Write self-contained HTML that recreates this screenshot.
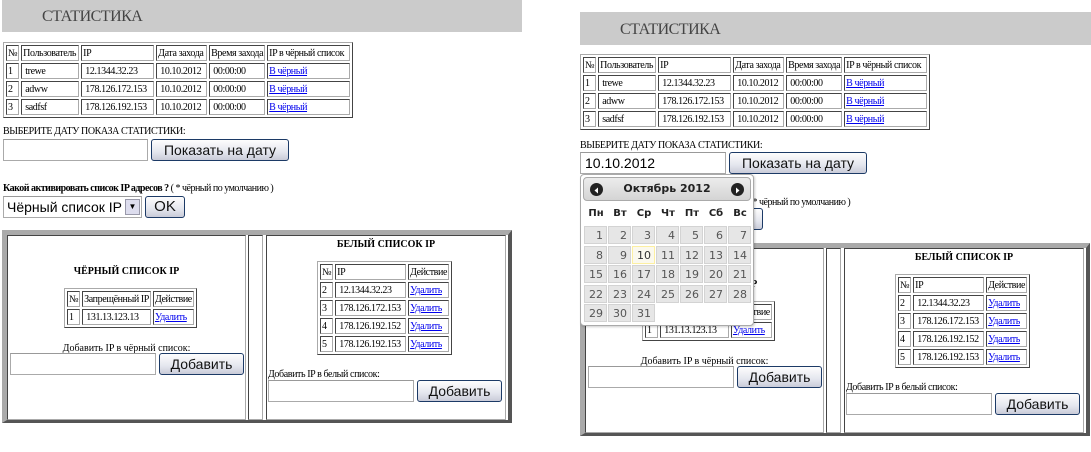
<!DOCTYPE html>
<html><head><meta charset="utf-8">
<style>
*{box-sizing:border-box}
body{margin:0;width:1091px;height:438px;overflow:hidden;background:#fff;font-family:"Liberation Serif","DejaVu Serif",serif;font-size:10px;color:#000;position:relative}
.p{position:absolute;width:540px;height:440px}
.a{position:absolute}
.hdr{background:#cbcbcb;height:33px;width:520px;left:2px;top:-1px;font-size:16px;color:#444;padding:9px 0 0 40px;letter-spacing:-0.5px}
table.t{position:absolute;border-collapse:separate;border-spacing:2px;border:1px solid;border-color:#aaa #444 #444 #aaa;font-size:10px;letter-spacing:-0.4px}
table.t td{border:1px solid;border-color:#444 #aaa #aaa #444;padding:0 1px;height:16px;white-space:nowrap}
a{color:#00e;text-decoration:underline}
.inp{position:absolute;border:1px solid #aaa;border-top-color:#999;background:#fff;height:22px;font-family:"Liberation Sans",sans-serif;font-size:14px;padding:2px 4px;white-space:nowrap;overflow:hidden}
.btn{position:absolute;height:22px;border:1px solid #1c3a66;border-radius:3px;background:linear-gradient(#fdfdfd,#e4e6ee 60%,#c9cbd8);font-family:"Liberation Sans",sans-serif;font-size:14px;text-align:center;line-height:20px;color:#111}
.frame{position:absolute;left:2px;top:230px;width:510px;height:193px;border:5px solid #aaa;border-right-color:#555;border-bottom-color:#555;border-right-width:4px;border-bottom-width:3px}
.cell{position:absolute;border:1px solid;border-color:#444 #aaa #aaa #444;top:0}
.b{font-weight:bold}
.dp{position:absolute;left:580px;top:174px;width:174px;height:152px;background:#fff;border:1px solid #aaa;border-radius:4px;box-shadow:1px 1px 2px rgba(0,0,0,.2)}
.dph{position:absolute;left:2px;top:2px;width:168px;height:24px;background:linear-gradient(#ececec,#d4d4d4);border:1px solid #aaa;border-radius:4px;font-family:"DejaVu Sans",sans-serif;font-weight:bold;font-size:11px;text-align:center;line-height:22px;color:#222}
.arr{position:absolute;top:5px;width:13px;height:13px;border-radius:50%;background:#222}
.dn{position:absolute;top:33px;width:24px;text-align:center;font-family:"DejaVu Sans",sans-serif;font-weight:bold;font-size:10px;color:#222}
.dc{position:absolute;width:23px;height:18px;background:#e6e6e6;border:1px solid #d3d3d3;font-family:"DejaVu Sans",sans-serif;font-size:11px;color:#555;text-align:right;padding-right:3px;line-height:17px}
.sel{font-size:14px;padding:2px 3px;line-height:17px}
.sa{position:absolute;right:1px;top:2px;width:15px;height:16px;border:1px solid #99a;background:#dde;font-size:8px;text-align:center;line-height:14px}
</style></head><body>

<!-- LEFT -->
<div class="p" style="left:0;top:0">
<div class="a hdr">СТАТИСТИКА</div>
<table class="t" style="left:3px;top:42px;width:350px">
<tr><td style="width:13px">№</td><td style="width:58px">Пользователь</td><td style="width:73px">IP</td><td style="width:51px">Дата захода</td><td style="width:56px">Время захода</td><td>IP в чёрный список</td></tr>
<tr><td>1</td><td>&nbsp;trewe</td><td>&nbsp;12.1344.32.23</td><td>&nbsp;10.10.2012</td><td>&nbsp;00:00:00</td><td><a>В чёрный</a></td></tr>
<tr><td>2</td><td>&nbsp;adww</td><td>&nbsp;178.126.172.153</td><td>&nbsp;10.10.2012</td><td>&nbsp;00:00:00</td><td><a>В чёрный</a></td></tr>
<tr><td>3</td><td>&nbsp;sadfsf</td><td>&nbsp;178.126.192.153</td><td>&nbsp;10.10.2012</td><td>&nbsp;00:00:00</td><td><a>В чёрный</a></td></tr>
</table>
<div class="a" style="left:3px;top:126px;letter-spacing:-0.4px">ВЫБЕРИТЕ ДАТУ ПОКАЗА СТАТИСТИКИ:</div>
<div class="inp" style="left:3px;top:139px;width:145px"></div>
<div class="btn" style="left:151px;top:139px;width:138px">Показать на дату</div>
<div class="a" style="left:3px;top:183px;letter-spacing:-0.5px"><b>Какой активировать список IP адресов ?</b> ( * чёрный по умолчанию )</div>
<div class="inp sel" style="left:3px;top:196px;width:139px">Чёрный список IP<span class="sa">&#9660;</span></div>
<div class="btn" style="left:145px;top:196px;width:40px;font-size:15px">OK</div>
<div class="frame">
 <div class="cell" style="left:0;width:239px;height:185px">
  <div class="a b" style="left:0;width:237px;text-align:center;top:30px">ЧЁРНЫЙ СПИСОК IP</div>
  <table class="t" style="left:56px;top:52px;width:127px">
   <tr><td style="width:12px">№</td><td style="width:63px">Запрещённый IP</td><td>Действие</td></tr>
   <tr><td>1</td><td>&nbsp;131.13.123.13</td><td><a>Удалить</a></td></tr>
  </table>
  <div class="a" style="left:0;width:237px;text-align:center;top:107px">Добавить IP в чёрный список:</div>
  <div class="inp" style="left:2px;top:117px;width:146px"></div>
  <div class="btn" style="left:151px;top:117px;width:85px">Добавить</div>
 </div>
 <div class="cell" style="left:241px;width:15px;height:185px"></div>
 <div class="cell" style="left:259px;width:240px;height:185px">
  <div class="a b" style="left:0;width:238px;text-align:center;top:3px">БЕЛЫЙ СПИСОК IP</div>
  <div style="position:absolute;left:50px;top:25px">
  <table class="t" style="position:static;width:135px">
   <tr><td style="width:12px">№</td><td style="width:72px">IP</td><td>Действие</td></tr>
   <tr><td>2</td><td>&nbsp;12.1344.32.23</td><td><a>Удалить</a></td></tr>
   <tr><td>3</td><td>&nbsp;178.126.172.153</td><td><a>Удалить</a></td></tr>
   <tr><td>4</td><td>&nbsp;178.126.192.152</td><td><a>Удалить</a></td></tr>
   <tr><td>5</td><td>&nbsp;178.126.192.153</td><td><a>Удалить</a></td></tr>
  </table></div>
  <div class="a" style="left:1px;top:133px;letter-spacing:-0.4px">Добавить IP в белый список:</div>
  <div class="inp" style="left:1px;top:144px;width:146px"></div>
  <div class="btn" style="left:150px;top:144px;width:85px">Добавить</div>
 </div>
</div>
</div>

<!-- RIGHT -->
<div class="p" style="left:578px;top:12px">
<div class="a hdr" style="top:0;height:33px">СТАТИСТИКА</div>
<table class="t" style="left:2px;top:42px;width:350px">
<tr><td style="width:13px">№</td><td style="width:58px">Пользователь</td><td style="width:73px">IP</td><td style="width:51px">Дата захода</td><td style="width:56px">Время захода</td><td>IP в чёрный список</td></tr>
<tr><td>1</td><td>&nbsp;trewe</td><td>&nbsp;12.1344.32.23</td><td>&nbsp;10.10.2012</td><td>&nbsp;00:00:00</td><td><a>В чёрный</a></td></tr>
<tr><td>2</td><td>&nbsp;adww</td><td>&nbsp;178.126.172.153</td><td>&nbsp;10.10.2012</td><td>&nbsp;00:00:00</td><td><a>В чёрный</a></td></tr>
<tr><td>3</td><td>&nbsp;sadfsf</td><td>&nbsp;178.126.192.153</td><td>&nbsp;10.10.2012</td><td>&nbsp;00:00:00</td><td><a>В чёрный</a></td></tr>
</table>
<div class="a" style="left:2px;top:128px;letter-spacing:-0.4px">ВЫБЕРИТЕ ДАТУ ПОКАЗА СТАТИСТИКИ:</div>
<div class="inp" style="left:2px;top:140px;width:146px">10.10.2012</div>
<div class="btn" style="left:151px;top:140px;width:138px">Показать на дату</div>
<div class="a" style="left:2px;top:185px;letter-spacing:-0.5px"><b>Какой активировать список IP адресов ?</b> ( * чёрный по умолчанию )</div>
<div class="inp sel" style="left:2px;top:196px;width:139px">Чёрный список IP</div>
<div class="btn" style="left:145px;top:196px;width:40px;font-size:15px">OK</div>
<div class="frame" style="left:2px;top:231px">
 <div class="cell" style="left:0;width:239px;height:185px">
  <div class="a b" style="left:0;width:237px;text-align:center;top:30px">ЧЁРНЫЙ СПИСОК IP</div>
  <table class="t" style="left:56px;top:52px;width:127px">
   <tr><td style="width:12px">№</td><td style="width:63px">Запрещённый IP</td><td>Действие</td></tr>
   <tr><td>1</td><td>&nbsp;131.13.123.13</td><td><a>Удалить</a></td></tr>
  </table>
  <div class="a" style="left:0;width:237px;text-align:center;top:107px">Добавить IP в чёрный список:</div>
  <div class="inp" style="left:2px;top:117px;width:146px"></div>
  <div class="btn" style="left:151px;top:117px;width:85px">Добавить</div>
 </div>
 <div class="cell" style="left:241px;width:15px;height:185px"></div>
 <div class="cell" style="left:259px;width:240px;height:185px">
  <div class="a b" style="left:0;width:238px;text-align:center;top:3px">БЕЛЫЙ СПИСОК IP</div>
  <div style="position:absolute;left:50px;top:25px">
  <table class="t" style="position:static;width:135px">
   <tr><td style="width:12px">№</td><td style="width:72px">IP</td><td>Действие</td></tr>
   <tr><td>2</td><td>&nbsp;12.1344.32.23</td><td><a>Удалить</a></td></tr>
   <tr><td>3</td><td>&nbsp;178.126.172.153</td><td><a>Удалить</a></td></tr>
   <tr><td>4</td><td>&nbsp;178.126.192.152</td><td><a>Удалить</a></td></tr>
   <tr><td>5</td><td>&nbsp;178.126.192.153</td><td><a>Удалить</a></td></tr>
  </table></div>
  <div class="a" style="left:1px;top:133px;letter-spacing:-0.4px">Добавить IP в белый список:</div>
  <div class="inp" style="left:1px;top:144px;width:146px"></div>
  <div class="btn" style="left:150px;top:144px;width:85px">Добавить</div>
 </div>
</div>
</div>

<!-- DATEPICKER -->
<div class="dp">
 <div class="dph">Октябрь 2012
  <div class="arr" style="left:6px"><svg width="13" height="13"><path d="M8 3.5L4.5 6.5L8 9.5Z" fill="#fff"/></svg></div>
  <div class="arr" style="right:6px"><svg width="13" height="13"><path d="M5 3.5L8.5 6.5L5 9.5Z" fill="#fff"/></svg></div>
 </div>
 <div class="dn" style="left:3px">Пн</div><div class="dn" style="left:27px">Вт</div><div class="dn" style="left:51px">Ср</div><div class="dn" style="left:75px">Чт</div><div class="dn" style="left:99px">Пт</div><div class="dn" style="left:123px">Сб</div><div class="dn" style="left:147px">Вс</div>
 <div class="dc" style="left:3px;top:51px">1</div><div class="dc" style="left:27px;top:51px">2</div><div class="dc" style="left:51px;top:51px">3</div><div class="dc" style="left:75px;top:51px">4</div><div class="dc" style="left:99px;top:51px">5</div><div class="dc" style="left:123px;top:51px">6</div><div class="dc" style="left:147px;top:51px">7</div>
 <div class="dc" style="left:3px;top:71px">8</div><div class="dc" style="left:27px;top:71px">9</div><div class="dc" style="left:51px;top:71px;background:#fbf9ee;border-color:#fcefa1;color:#333">10</div><div class="dc" style="left:75px;top:71px">11</div><div class="dc" style="left:99px;top:71px">12</div><div class="dc" style="left:123px;top:71px">13</div><div class="dc" style="left:147px;top:71px">14</div>
 <div class="dc" style="left:3px;top:90px">15</div><div class="dc" style="left:27px;top:90px">16</div><div class="dc" style="left:51px;top:90px">17</div><div class="dc" style="left:75px;top:90px">18</div><div class="dc" style="left:99px;top:90px">19</div><div class="dc" style="left:123px;top:90px">20</div><div class="dc" style="left:147px;top:90px">21</div>
 <div class="dc" style="left:3px;top:110px">22</div><div class="dc" style="left:27px;top:110px">23</div><div class="dc" style="left:51px;top:110px">24</div><div class="dc" style="left:75px;top:110px">25</div><div class="dc" style="left:99px;top:110px">26</div><div class="dc" style="left:123px;top:110px">27</div><div class="dc" style="left:147px;top:110px">28</div>
 <div class="dc" style="left:3px;top:129px">29</div><div class="dc" style="left:27px;top:129px">30</div><div class="dc" style="left:51px;top:129px">31</div>
</div>
</body></html>
